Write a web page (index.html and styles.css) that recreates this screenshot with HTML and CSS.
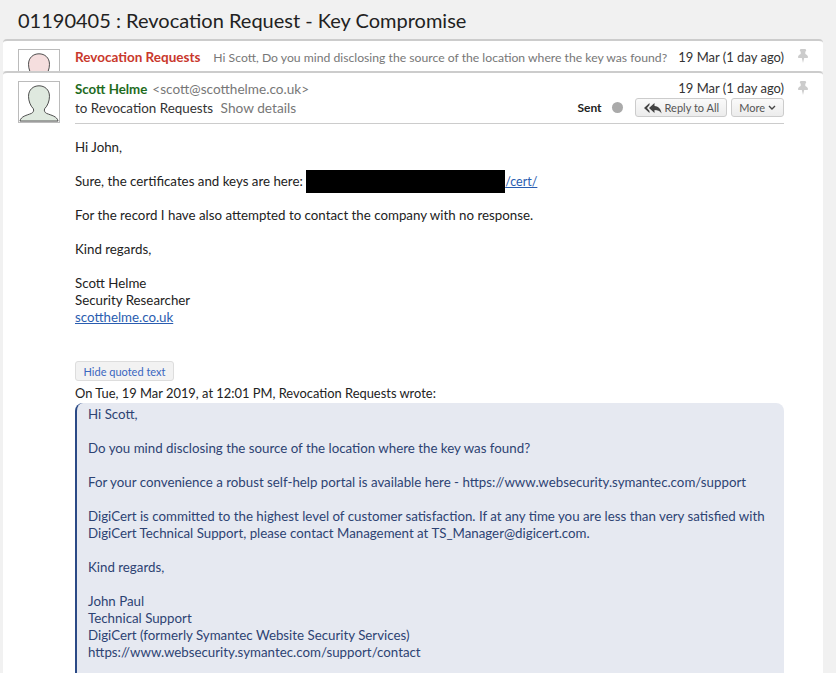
FILE: index.html
```html
<!DOCTYPE html>
<html lang="en">
<head>
<meta charset="utf-8">
<title>01190405 : Revocation Request - Key Compromise</title>
<link rel="stylesheet" href="styles.css">
</head>
<body>
<h1 class="subject">01190405 : Revocation Request - Key Compromise</h1>
<section class="thread">
  <article class="card collapsed">
    <svg class="avatar avatar-red" viewBox="0 0 42 42"><path d="M1 41c1-5 7-6 12-8 2-1 3-3 2-5-3-3-5-8-5-13 0-7 5-11 11-11s11 4 11 11c0 5-2 10-5 13-1 2 0 4 2 5 5 2 11 3 12 8z"/></svg>
    <div class="collapsed-row">
      <span class="from-red">Revocation Requests</span>
      <span class="snippet">Hi Scott, Do you mind disclosing the source of the location where the key was found?</span>
      <span class="date">19 Mar (1 day ago)</span>
    </div>
    <svg class="pin" viewBox="0 0 10 14"><path d="M3 0h4c1 0 1.500 1 1 2l-.7.800v2.200C8.500 5.600 10 6.500 10 8c0 .6-.4 1-1 1H6.200L5 14 3.800 9H1c-.6 0-1-.4-1-1 0-1.500 1.500-2.400 2.700-3V2.800L2 2C1.500 1 2 0 3 0z"/></svg>
  </article>
  <article class="card open">
    <svg class="avatar avatar-green" viewBox="0 0 42 42"><path d="M1 41c1-5 7-6 12-8 2-1 3-3 2-5-3-3-5-8-5-13 0-7 5-11 11-11s11 4 11 11c0 5-2 10-5 13-1 2 0 4 2 5 5 2 11 3 12 8z"/></svg>
    <div class="message">
      <header class="msg-head">
        <div class="who">
          <div class="from-line"><span class="from-green">Scott Helme</span><span class="addr">&lt;scott@scotthelme.co.uk&gt;</span></div>
          <div class="to">to Revocation Requests <span class="details">Show details</span></div>
        </div>
        <div class="meta">
          <div class="date">19 Mar (1 day ago)</div>
          <div class="actions">
            <span class="sent">Sent</span><span class="dot"></span>
            <button class="btn reply"><svg class="reply-icon" viewBox="0 0 18 12"><path d="M5.500 1 0 6l5.500 5V9L3 6l2.500-3zM10.500 1 5 6l5.500 5V8c3 0 5.500 .8 7 3.500C17.200 7.500 15 4.500 10.500 4z"/></svg>Reply to All</button>
            <button class="btn more">More<svg class="chev" viewBox="0 0 8 5"><path d="M1 1l3 3 3-3"/></svg></button>
          </div>
        </div>
      </header>
      <div class="body">
        <p>Hi John,</p>
        <p>Sure, the certificates and keys are here: <span class="redact"></span><a class="cert" href="#">/cert/</a></p>
        <p>For the record I have also attempted to contact the company with no response.</p>
        <p>Kind regards,</p>
        <p>Scott Helme<br>Security Researcher<br><a href="#">scotthelme.co.uk</a></p>
        <button class="quote-toggle">Hide quoted text</button>
        <div class="attrib">On Tue, 19 Mar 2019, at 12:01 PM, Revocation Requests wrote:</div>
        <blockquote class="quote">
          <p>Hi Scott,</p>
          <p>Do you mind disclosing the source of the location where the key was found?</p>
          <p>For your convenience a robust self-help portal is available here - https://www.websecurity.symantec.com/support</p>
          <p>DigiCert is committed to the highest level of customer satisfaction. If at any time you are less than very satisfied with DigiCert Technical Support, please contact Management at TS_Manager@digicert.com.</p>
          <p>Kind regards,</p>
          <p>John Paul<br>Technical Support<br>DigiCert (formerly Symantec Website Security Services)<br>https://www.websecurity.symantec.com/support/contact</p>
        </blockquote>
      </div>
    </div>
    <svg class="pin" viewBox="0 0 10 14"><path d="M3 0h4c1 0 1.500 1 1 2l-.7.800v2.200C8.500 5.600 10 6.500 10 8c0 .6-.4 1-1 1H6.200L5 14 3.800 9H1c-.6 0-1-.4-1-1 0-1.500 1.500-2.400 2.700-3V2.800L2 2C1.500 1 2 0 3 0z"/></svg>
  </article>
</section>
</body>
</html>
```
FILE: styles.css
```css
* { box-sizing: border-box; }
html, body { margin: 0; height: 673px; overflow: hidden; }
body {
  background: #f1f1f1;
  color: #222;
  font-family: "Lato", "Open Sans", sans-serif;
  font-size: 13.300px;
  line-height: 17px;
}
.subject {
  margin: 0;
  padding: 7px 0 0 18px;
  height: 39px;
  font-size: 20px;
  line-height: 26px;
  font-weight: 400;
  color: #222;
}
.thread { margin: 0 13px 0 3px; }
.card {
  display: flex;
  background: #fff;
  border-top: 2px solid #ccc;
  border-radius: 4px 4px 0 0;
  padding: 8px 15px 0 15px;
}
.collapsed { height: 32px; overflow: hidden; }
.open { height: 640px; overflow: hidden; }
.avatar {
  flex: none;
  width: 42px;
  height: 42px;
  border: 1px solid #bbb;
  background: #fff;
  stroke: #444;
  stroke-width: 1;
}
.avatar-red { fill: #f5dede; }
.avatar-green { fill: #dfe9df; }
.collapsed-row {
  flex: 1;
  min-width: 0;
  display: flex;
  margin-left: 15px;
  white-space: nowrap;
  line-height: 17px;
}
.from-red { color: #c9382c; font-weight: 700; font-size: 13.500px; }
.snippet { color: #777; font-size: 12.200px; margin-left: 13px; flex: 1; }
.date { color: #333; font-size: 13px; text-align: right; }
.pin { flex: none; width: 10px; height: 14px; margin-left: 14px; fill: #ccc; }
.message { flex: 1; margin-left: 15px; min-width: 0; }
.msg-head {
  display: flex;
  justify-content: space-between;
  height: 43px;
  border-bottom: 1px solid #ccc;
}
.who { line-height: 18px; margin-top: -1px; }
.from-line { display: flex; align-items: baseline; }
.from-green { color: #1e6b1e; font-weight: 700; font-size: 13.300px; }
.addr { color: #777; font-size: 13.600px; margin-left: 5px; }
.to { color: #333; font-size: 13.400px; margin-top: 1px; }
.details { color: #777; font-size: 13.700px; margin-left: 4px; }
.meta .date { margin-top: -1px; }
.actions { display: flex; align-items: center; justify-content: flex-end; margin-top: 1px; }
.sent { font-size: 12px; font-weight: 700; color: #222; }
.dot { width: 11px; height: 11px; border-radius: 50%; background: #aaa; margin: 0 12px 0 10px; }
.btn {
  height: 19px;
  padding: 0 7px 0 6px;
  border: 1px solid #ccc;
  border-radius: 3px;
  background: linear-gradient(#fafafa, #ececec);
  color: #555;
  font: inherit;
  font-size: 11px;
  line-height: 16px;
  display: inline-flex;
  align-items: center;
}
.more { margin-left: 4px; padding: 0 7px; }
.reply-icon { width: 18px; height: 12px; margin: 0 3px 0 2px; fill: #444; }
.chev { width: 8px; height: 5px; margin-left: 3px; fill: none; stroke: #444; stroke-width: 1.400; }
.body { padding-top: 15px; }
.body p { margin: 0 0 17px; }
.body a { color: #2a5db0; text-decoration: underline; }
.body .cert { font-size: 12.500px; }
.redact { display: inline-block; width: 199px; height: 23px; margin: -6px 0; background: #000; vertical-align: -1px; }
.quote-toggle {
  display: block;
  margin-top: 35px;
  height: 20px;
  width: 99px;
  padding: 0;
  border: 1px solid #ddd;
  border-radius: 3px;
  background: #f2f2f2;
  color: #3a66c0;
  font: inherit;
  font-size: 11px;
}
.attrib { margin-top: 4px; font-size: 12.900px; }
.quote {
  margin: 1px 0 0;
  padding: 3px 10px 0 11px;
  background: #e6e9f1;
  border-left: 2px solid #2b4a86;
  border-radius: 8px 8px 0 0;
  color: #2d4373;
  height: 400px;
}
.quote p { margin: 0 0 17px; }
```
